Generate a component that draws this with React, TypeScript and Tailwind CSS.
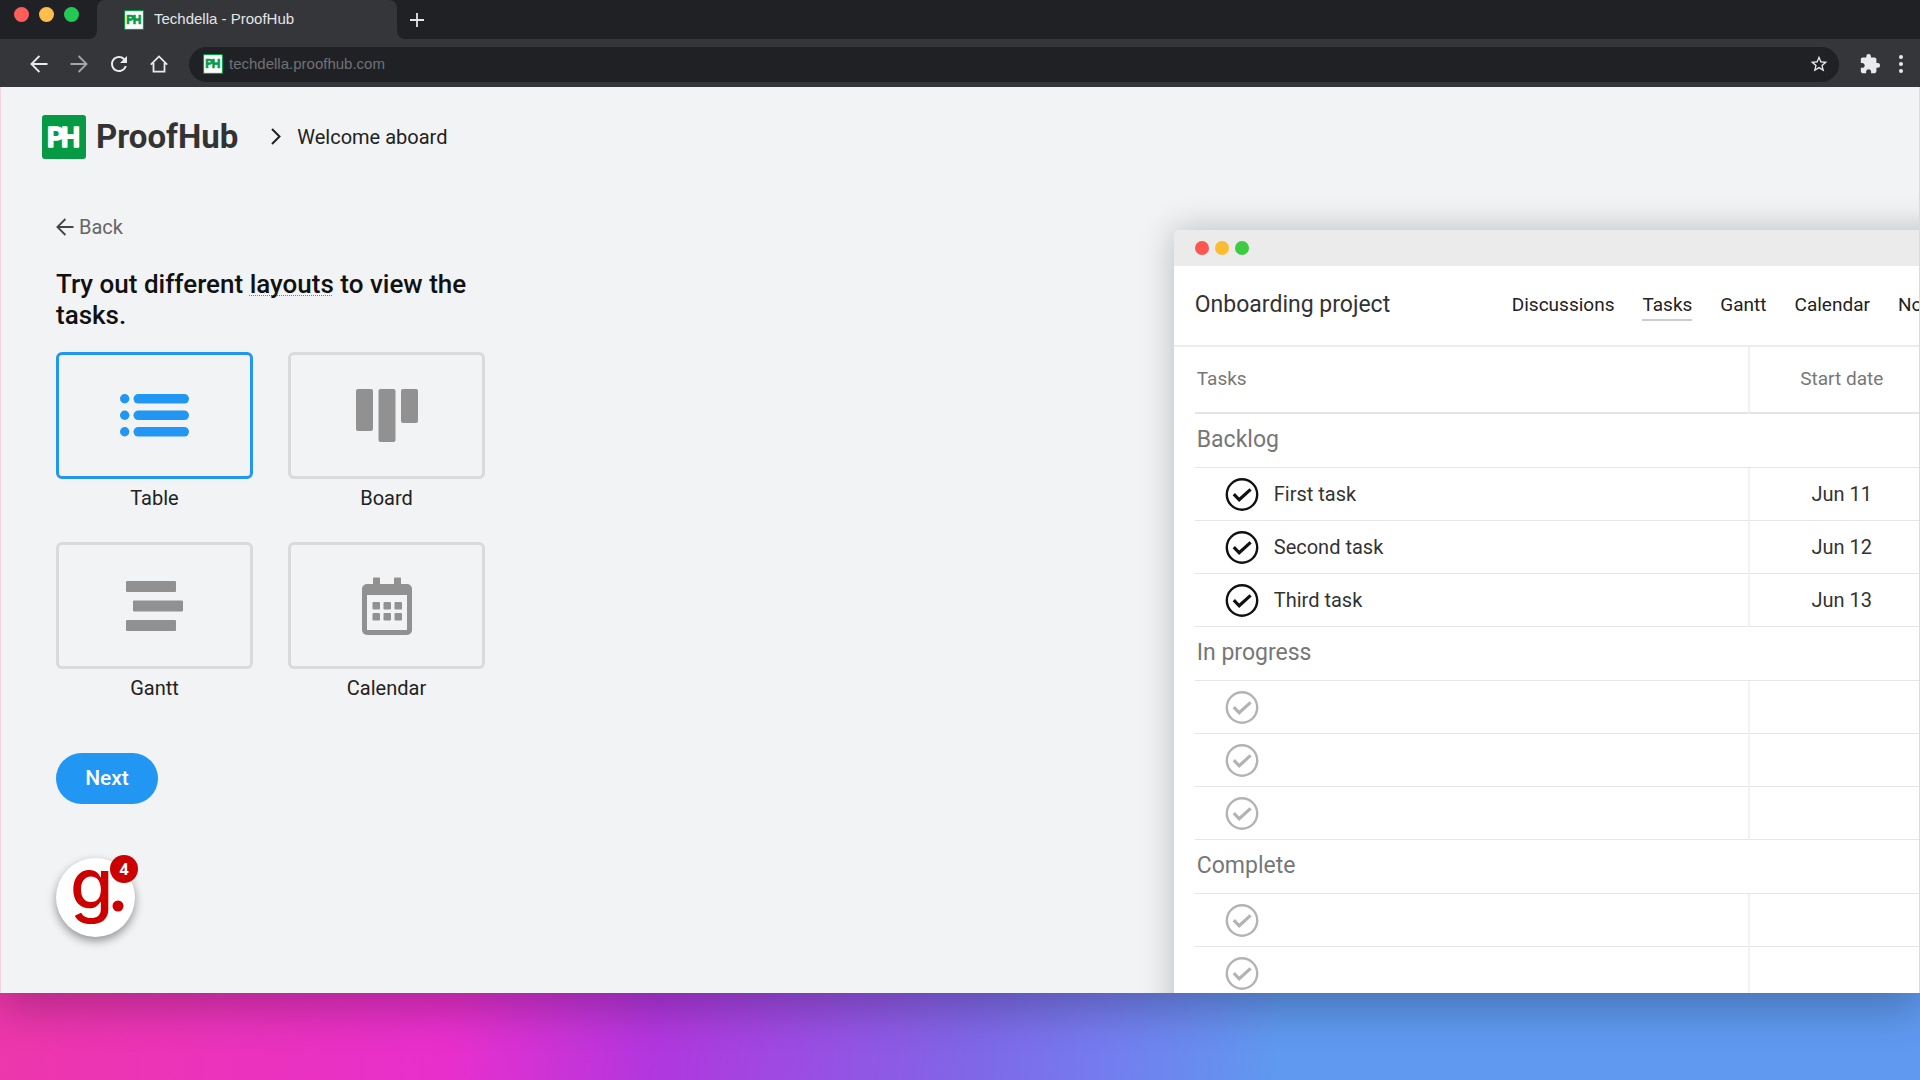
import { useState } from "react";
import type { ReactNode } from "react";
import { MdExtension, MdRefresh, MdStarBorder } from "react-icons/md";

const ArrowIcon = ({ className }: { className?: string }) => (
  <svg viewBox="0 0 18 18" fill="none" stroke="currentColor" strokeWidth="1.8" className={className}>
    <path d="M17.5 9H1.8M9.4 1L1.4 9l8 8" />
  </svg>
);

const HomeIcon = () => (
  <svg viewBox="0 0 18 18" fill="none" stroke="currentColor" strokeWidth="1.8" className="size-[18px]">
    <path d="M.8 9.6L9 1.4l8.2 8.2M3.5 8v8.6h11V8" />
  </svg>
);

const CheckIcon = ({ done }: { done: boolean }) => (
  <svg
    viewBox="0 0 34 34"
    fill="none"
    stroke={done ? "#111111" : "#b3b3b3"}
    className="size-[34px] shrink-0"
  >
    <circle cx="17" cy="17.5" r="15.2" strokeWidth="2.4" />
    <path d="M8.8 17.2l5.4 5.6L25.6 12.4" strokeWidth="3.2" />
  </svg>
);

const LogoMark = ({ inverted, className }: { inverted?: boolean; className?: string }) => {
  const ink = inverted ? "#069a44" : "#ffffff";
  return (
    <svg viewBox="0 0 44 44" className={className} aria-hidden="true">
      <rect width="44" height="44" rx="3" fill="#069a44" />
      {inverted && <rect x="2.5" y="2.5" width="39" height="39" fill="#ffffff" />}
      <g
        fill={ink}
        stroke={ink}
        strokeWidth="1.4"
        strokeLinejoin="round"
        fontFamily="Roboto, sans-serif"
        fontWeight="700"
        fontSize="27"
      >
        <text x="5" y="31.5">P</text>
        <text x="19" y="31.5">H</text>
      </g>
    </svg>
  );
};

const TableIcon = () => (
  <svg viewBox="0 0 70 43" fill="currentColor" className="h-[43px] w-[70px]">
    {[0, 16.5, 33].map((y) => (
      <g key={y}>
        <circle cx="4.7" cy={y + 4.8} r="4.7" />
        <rect x="13.5" y={y} width="55.5" height="9.6" rx="4.8" />
      </g>
    ))}
  </svg>
);

const BoardIcon = () => (
  <svg viewBox="0 0 62 53" fill="currentColor" className="h-[53px] w-[62px]">
    <rect width="17" height="42" rx="2" />
    <rect x="22.5" width="17" height="53" rx="2" />
    <rect x="45" width="17" height="34" rx="2" />
  </svg>
);

const GanttIcon = () => (
  <svg viewBox="0 0 57 50" fill="currentColor" className="h-[50px] w-[57px]">
    <rect width="50" height="11" rx="1" />
    <rect x="7" y="19.5" width="50" height="11" rx="1" />
    <rect y="39" width="50" height="11" rx="1" />
  </svg>
);

const CalendarIcon = () => (
  <svg viewBox="0 0 50 58" fill="currentColor" className="h-[58px] w-[50px]">
    <path
      fillRule="evenodd"
      d="M5 7h6V1.5a1 1 0 0 1 1-1h5a1 1 0 0 1 1 1V7h14V1.5a1 1 0 0 1 1-1h5a1 1 0 0 1 1 1V7h6a5 5 0 0 1 5 5v41a5 5 0 0 1-5 5H5a5 5 0 0 1-5-5V12a5 5 0 0 1 5-5zm0 11v35h40V18z"
    />
    {[25, 36].map((y) =>
      [10.5, 21.5, 32.5].map((x) => (
        <rect key={`${x}-${y}`} x={x} y={y} width="7.5" height="7.5" rx="1" />
      ))
    )}
  </svg>
);

const layouts: { name: string; icon: ReactNode }[] = [
  { name: "Table", icon: <TableIcon /> },
  { name: "Board", icon: <BoardIcon /> },
  { name: "Gantt", icon: <GanttIcon /> },
  { name: "Calendar", icon: <CalendarIcon /> },
];

const tabs = ["Discussions", "Tasks", "Gantt", "Calendar", "Notes"];

const sections = [
  {
    title: "Backlog",
    tasks: [
      { name: "First task", date: "Jun 11" },
      { name: "Second task", date: "Jun 12" },
      { name: "Third task", date: "Jun 13" },
    ],
  },
  {
    title: "In progress",
    tasks: [{ name: "", date: "" }, { name: "", date: "" }, { name: "", date: "" }],
  },
  {
    title: "Complete",
    tasks: [{ name: "", date: "" }, { name: "", date: "" }, { name: "", date: "" }],
  },
];

const BrowserBar = () => (
  <header className="font-['Liberation_Sans',Arial,sans-serif] text-[15px]">
    <div className="flex h-[39px] bg-[#35363a]">
      <div className="flex w-[97px] shrink-0 gap-[10px] rounded-br-lg bg-[#202124] pl-[14px] pt-[7px]">
        <span className="size-[15px] rounded-full bg-[#ff5c5c]" />
        <span className="size-[15px] rounded-full bg-[#ffbd4c]" />
        <span className="size-[15px] rounded-full bg-[#22c955]" />
      </div>
      <div className="flex w-[300px] shrink-0 bg-linear-to-b from-[#202124] from-50% to-[#35363a] to-50%">
        <div className="flex flex-1 items-center gap-[10px] rounded-t-lg bg-[#35363a] pl-[27px] text-[#e4e5e7]">
          <LogoMark inverted className="size-5" />
          <span>Techdella - ProofHub</span>
        </div>
      </div>
      <div className="flex flex-1 rounded-bl-lg bg-[#202124]">
        <button aria-label="New tab" className="flex w-10 items-center justify-center text-[#e4e5e7]">
          <svg viewBox="0 0 14 14" stroke="currentColor" strokeWidth="1.8" className="size-[14px]">
            <path d="M7 0v14M0 7h14" />
          </svg>
        </button>
      </div>
    </div>
    <div className="flex h-12 items-center bg-[#35363a] pl-[30px] pr-[10px] pt-[2px] text-[#e8eaed]">
      <div className="flex w-[159px] shrink-0 items-center gap-[22px]">
        <button aria-label="Go back">
          <ArrowIcon className="size-[18px]" />
        </button>
        <button aria-label="Go forward" className="text-[#a3a5a9]">
          <ArrowIcon className="size-[18px] rotate-180" />
        </button>
        <button aria-label="Reload" className="-mx-[3px]">
          <MdRefresh className="size-6" />
        </button>
        <button aria-label="Home">
          <HomeIcon />
        </button>
      </div>
      <div className="flex h-[35px] flex-1 items-center rounded-full bg-[#202124] pl-[14px] pr-[10px]">
        <LogoMark inverted className="size-5" />
        <input
          aria-label="Address"
          defaultValue="techdella.proofhub.com"
          className="ml-[6px] flex-1 bg-transparent text-[#717276] outline-none"
        />
        <button aria-label="Bookmark">
          <MdStarBorder className="size-5" />
        </button>
      </div>
      <button aria-label="Extensions" className="ml-5">
        <MdExtension className="size-[22px]" />
      </button>
      <button aria-label="Menu" className="ml-[11px] flex w-[18px] flex-col items-center gap-[3px]">
        <span className="size-1 rounded-full bg-current" />
        <span className="size-1 rounded-full bg-current" />
        <span className="size-1 rounded-full bg-current" />
      </button>
    </div>
  </header>
);

const LayoutPicker = () => {
  const [selected, setSelected] = useState("Table");

  return (
    <section className="pl-[55px] text-xl text-[#222222]">
      <a href="#back" className="flex h-6 w-fit items-center gap-[5px] text-[#666666]">
        <ArrowIcon className="size-[18px] text-[#444444]" />
        Back
      </a>
      <h1 className="mt-[30px] w-[430px] text-[26px] font-medium leading-[31px] text-[#111111]">
        Try out different{" "}
        <span className="underline decoration-[#2196f3] decoration-dotted decoration-1 underline-offset-2 [text-decoration-skip-ink:none]">
          layouts
        </span>{" "}
        to view the tasks.
      </h1>
      <div className="mt-[21px] grid w-[429px] grid-cols-2 gap-x-[35px] gap-y-[30px]">
        {layouts.map(({ name, icon }) => (
          <button key={name} onClick={() => setSelected(name)} className="flex flex-col">
            <span
              className={
                selected === name
                  ? "flex h-[127px] w-full items-center justify-center rounded-md border-3 border-[#2196f3] text-[#2196f3]"
                  : "flex h-[127px] w-full items-center justify-center rounded-md border-3 border-[#d8dadc] text-[#919191]"
              }
            >
              {icon}
            </span>
            <span className="mt-[5px] w-full leading-7">{name}</span>
          </button>
        ))}
      </div>
      <button className="mt-[51px] h-[51px] w-[102px] rounded-full bg-[#2196f3] text-[21px] font-medium text-white">
        Next
      </button>
    </section>
  );
};

const HelpWidget = () => (
  <button
    aria-label="Open checklist"
    className="relative ml-[55px] mt-[54px] size-[79px] rounded-full bg-white shadow-[0_4px_10px_rgba(0,0,0,0.4)]"
  >
    <svg viewBox="0 0 79 79" fill="#cc0000" className="size-full">
      <text x="14" y="51" fontFamily="Inter, sans-serif" fontWeight="500" fontSize="70">
        g
      </text>
      <circle cx="62" cy="48" r="5.5" />
    </svg>
    <span className="absolute -right-[3px] -top-[3px] flex size-7 items-center justify-center rounded-full bg-[#cc0000] font-['Open_Sans',sans-serif] text-base font-bold text-white">
      4
    </span>
  </button>
);

const ProjectWindow = () => (
  <section className="w-[1100px] rounded-t-md bg-white shadow-[0_0_34px_rgba(0,0,0,0.24)]">
    <div className="flex h-9 items-center gap-[6px] rounded-t-md bg-[#ebebeb] pl-[21px]">
      <span className="size-[14px] rounded-full bg-[#fa5750]" />
      <span className="size-[14px] rounded-full bg-[#fcbc2f]" />
      <span className="size-[14px] rounded-full bg-[#3ccb41]" />
    </div>
    <div className="flex h-[81px] items-center border-b-2 border-[#ececec] pl-[21px]">
      <h2 className="w-[317px] text-[23px] text-[#333333]">Onboarding project</h2>
      <nav className="flex gap-7 text-[19px] leading-7 text-[#222222]">
        {tabs.map((tab) => (
          <a
            key={tab}
            href="#tab"
            className={
              tab === "Tasks" ? "border-b-2 border-[#cccccc]" : "border-b-2 border-transparent"
            }
          >
            {tab}
          </a>
        ))}
      </nav>
    </div>
    <div className="pl-[21px]">
      <table className="w-full table-fixed border-separate border-spacing-0 text-left text-[#333333]">
        <colgroup>
          <col className="w-[553px]" />
          <col className="w-[186px]" />
          <col />
        </colgroup>
        <thead className="text-[19px] text-[#777777]">
          <tr className="h-[67px]">
            <th className="border-b-2 border-[#e4e4e4] pl-[2px] font-normal">Tasks</th>
            <th className="border-b-2 border-l-2 border-b-[#e4e4e4] border-l-[#f0f0f0] text-center font-normal">
              Start date
            </th>
            <th className="border-b-2 border-l-2 border-b-[#e4e4e4] border-l-[#f0f0f0] text-center font-normal">
              End date
            </th>
          </tr>
        </thead>
        {sections.map(({ title, tasks }) => (
          <tbody key={title} className="text-xl">
            <tr className="h-[54px]">
              <th
                colSpan={3}
                className="border-b border-[#e6e6e6] pl-[2px] text-[23px] font-normal text-[#777777]"
              >
                {title}
              </th>
            </tr>
            {tasks.map(({ name, date }, index) => (
              <tr key={index} className="h-[53px]">
                <td className="border-b border-[#e6e6e6] p-0 pl-[30px]">
                  <div className="flex items-center gap-[15px]">
                    <CheckIcon done={name !== ""} />
                    {name}
                  </div>
                </td>
                <td className="border-b border-l-2 border-b-[#e6e6e6] border-l-[#f2f2f2] p-0 text-center">
                  {date}
                </td>
                <td className="border-b border-l-2 border-b-[#e6e6e6] border-l-[#f2f2f2] p-0" />
              </tr>
            ))}
          </tbody>
        ))}
      </table>
    </div>
  </section>
);

const App = () => {
  return (
    <div className="flex h-screen flex-col overflow-hidden bg-[linear-gradient(95deg,#ee38a4_0%,#e82fcd_27%,#b236de_37%,#7f67e8_53%,#757bee_59%,#5f99f0_68%,#5f99f0_100%)] pb-[87px] font-[Roboto,sans-serif]">
      <div className="flex min-h-0 flex-1 flex-col shadow-[0_16px_40px_rgba(0,0,0,0.24)]">
        <BrowserBar />
        <main className="grid min-h-0 flex-1 grid-cols-[1174fr_746fr] overflow-hidden border-x border-l-[#f0d6e2] border-r-[#d3dcea] bg-[#f1f3f5]">
          <div>
            <div className="flex h-[99px] items-center pl-[41px]">
              <LogoMark className="size-11" />
              <span className="ml-[10px] text-[33px] font-bold text-[#333333]">ProofHub</span>
              <svg
                viewBox="0 0 10 17"
                fill="none"
                stroke="#222222"
                strokeWidth="2"
                className="ml-[33px] h-[17px] w-[10px]"
              >
                <path d="M1 1l7.5 7.5L1 16" />
              </svg>
              <span className="ml-4 text-xl text-[#222222]">Welcome aboard</span>
            </div>
            <div className="pt-[29px]">
              <LayoutPicker />
              <HelpWidget />
            </div>
          </div>
          <div className="min-w-0 pt-[143px]">
            <ProjectWindow />
          </div>
        </main>
      </div>
    </div>
  );
};

export default App;
